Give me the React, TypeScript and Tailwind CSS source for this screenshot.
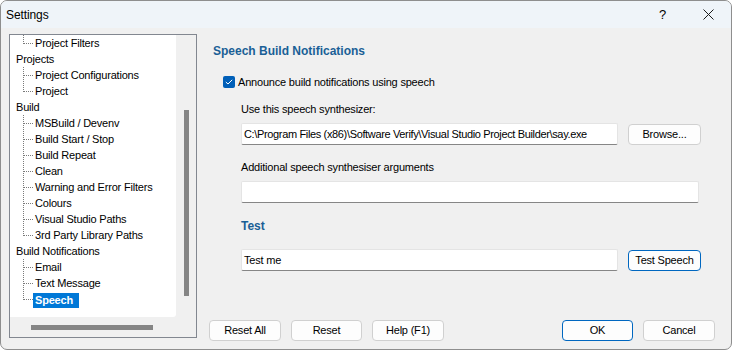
import { ReactNode } from 'react'

type TreeRow = { label: string; child?: boolean; last?: boolean; selected?: boolean }

const rows: TreeRow[] = [
  { label: 'Project Filters', child: true, last: true },
  { label: 'Projects' },
  { label: 'Project Configurations', child: true },
  { label: 'Project', child: true, last: true },
  { label: 'Build' },
  { label: 'MSBuild / Devenv', child: true },
  { label: 'Build Start / Stop', child: true },
  { label: 'Build Repeat', child: true },
  { label: 'Clean', child: true },
  { label: 'Warning and Error Filters', child: true },
  { label: 'Colours', child: true },
  { label: 'Visual Studio Paths', child: true },
  { label: '3rd Party Library Paths', child: true, last: true },
  { label: 'Build Notifications' },
  { label: 'Email', child: true },
  { label: 'Text Message', child: true },
  { label: 'Speech', child: true, last: true, selected: true },
]

function Connector({ last }: { last?: boolean }) {
  return (
    <svg width="25" height="16" className="shrink-0" shapeRendering="crispEdges">
      <line x1="13.5" y1="0" x2="13.5" y2={last ? 9 : 16} stroke="#7a7a7a" strokeDasharray="1 1" />
      <line x1="14" y1="8.5" x2="24" y2="8.5" stroke="#7a7a7a" strokeDasharray="1 1" />
    </svg>
  )
}

function Tree() {
  return (
    <div className="w-[188px] h-[304px] mt-[6px] border border-[#828790] flex flex-col shrink-0">
      <div className="flex h-[282px]">
        <div className="w-[166px] h-full bg-white rounded-br-[3px] flex flex-col">
          {rows.map((r) => (
            <div key={r.label} className="h-[16px] flex items-center text-black whitespace-nowrap">
              {r.child ? <Connector last={r.last} /> : <div className="w-[6px]" />}
              {r.selected ? (
                <span className="bg-[#0078d7] text-white font-bold h-[15px] leading-[15px] ml-[-2px] pl-[2px] pr-[6px] mt-[2px]">
                  {r.label}
                </span>
              ) : (
                <span className="leading-[16px]">{r.label}</span>
              )}
            </div>
          ))}
        </div>
        <div className="w-[20px] h-full flex justify-center">
          <div className="w-[5px] h-[186px] mt-[75px] bg-[#858585]" />
        </div>
      </div>
      <div className="h-[20px] flex items-center">
        <div className="ml-[21px] w-[122px] h-[5px] bg-[#858585]" />
      </div>
    </div>
  )
}

function Button({ children, primary, className = '' }: { children: ReactNode; primary?: boolean; className?: string }) {
  return (
    <button
      className={`h-[21px] rounded-[4px] bg-[#fdfdfd] text-black leading-none flex items-center justify-center ${
        primary ? 'border border-[#0067c0]' : 'border border-[#d0d0d0]'
      } ${className}`}
    >
      {children}
    </button>
  )
}

function TextBox({ value, className = '' }: { value?: string; className?: string }) {
  return (
    <div
      className={`h-[22px] bg-white border border-[#e4e4e4] border-b-[#868686] rounded-[2px] pl-[2px] flex items-center whitespace-nowrap overflow-hidden ${className}`}
    >
      {value}
    </div>
  )
}

export default function App() {
  return (
    <div className="w-[733px] h-[352px] bg-white font-['Liberation_Sans',Arial,sans-serif] text-[11px] tracking-[-0.2px]">
      <div className="w-[732px] h-[350px] bg-[#f0f0f0] border border-[#8e8e8e] rounded-[7px] overflow-hidden flex flex-col">
        <div className="h-[27px] bg-[#eff4f9] flex items-center shrink-0">
          <span className="ml-[5px] text-[12px] tracking-[-0.1px] text-black">Settings</span>
          <span className="ml-auto text-[13px] text-black mr-[37px]">?</span>
          <svg width="11" height="11" viewBox="0 0 11 11" className="mr-[17px]">
            <path d="M0.5 0.5 L10.5 10.5 M10.5 0.5 L0.5 10.5" stroke="#1a1a1a" strokeWidth="1" />
          </svg>
        </div>
        <div className="flex flex-1 pl-[8px]">
          <Tree />
          <div className="flex flex-col flex-1 ml-[12px] pb-[8px]">
            <div className="mt-[15px] ml-[4px] h-[16px] leading-[16px] text-[12px] font-bold tracking-normal text-[#1a5f96]">
              Speech Build Notifications
            </div>
            <div className="mt-[15px] ml-[14px] h-[16px] flex items-center">
              <div className="w-[12px] h-[12px] rounded-[2px] bg-[#005fb8] flex items-center justify-center">
                <svg width="8" height="6" viewBox="0 0 8 6">
                  <path d="M0.8 3 L3 5 L7.2 0.8" stroke="white" strokeWidth="1" fill="none" />
                </svg>
              </div>
              <span className="ml-[3px] text-black">Announce build notifications using speech</span>
            </div>
            <div className="ml-[32px] flex flex-col">
              <div className="mt-[11px] h-[16px] leading-[16px] text-black">Use this speech synthesizer:</div>
              <div className="mt-[6px] flex items-center">
                <TextBox
                  className="w-[377px] tracking-[-0.35px]"
                  value="C:\Program Files (x86)\Software Verify\Visual Studio Project Builder\say.exe"
                />
                <Button className="ml-[10px] w-[73px]">Browse...</Button>
              </div>
              <div className="mt-[14px] h-[16px] leading-[16px] text-black">Additional speech synthesiser arguments</div>
              <TextBox className="mt-[6px] w-[458px]" />
              <div className="mt-[15px] h-[16px] leading-[16px] text-[12px] font-bold tracking-normal text-[#1a5f96]">Test</div>
              <div className="mt-[15px] flex items-center">
                <TextBox className="w-[377px]" value="Test me" />
                <Button primary className="ml-[10px] w-[73px]">Test Speech</Button>
              </div>
            </div>
            <div className="mt-auto flex items-center pr-[16px]">
              <Button className="w-[72px]">Reset All</Button>
              <Button className="ml-[10px] w-[71px]">Reset</Button>
              <Button className="ml-[10px] w-[72px]">Help (F1)</Button>
              <Button primary className="ml-auto w-[71px]">OK</Button>
              <Button className="ml-[10px] w-[72px]">Cancel</Button>
            </div>
          </div>
        </div>
      </div>
    </div>
  )
}
